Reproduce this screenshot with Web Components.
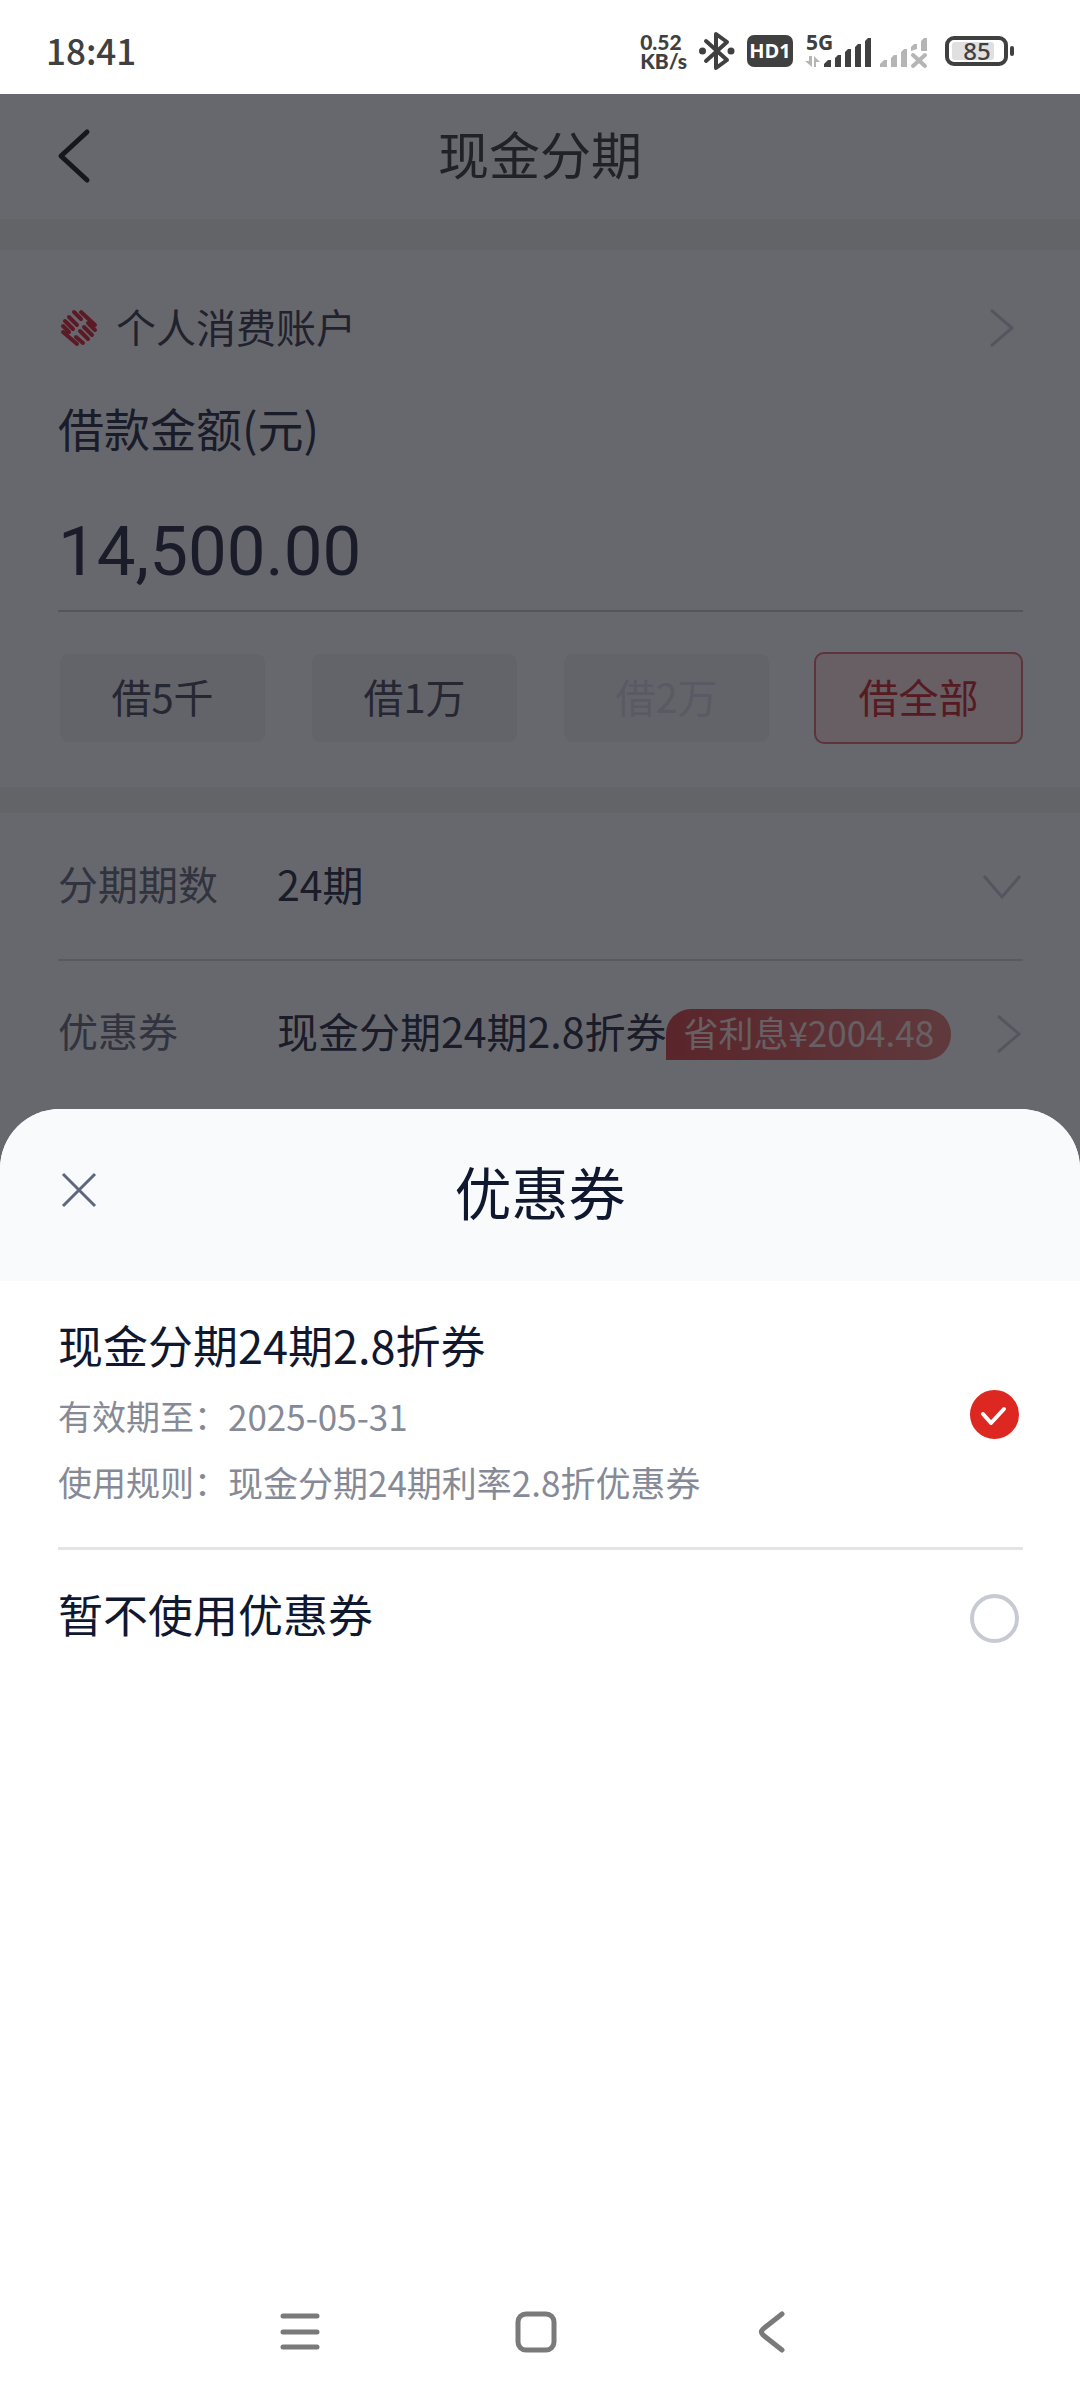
<!DOCTYPE html>
<html lang="zh-CN">
<head>
<meta charset="UTF-8">
<meta name="viewport" content="width=device-width, initial-scale=1">
<title>现金分期</title>
<style>
  :root {
    --ink: #10182f;
    --muted: #868a96;
    --red: #dd2822;
    --pad-l: 58px;
    --pad-r: 57px;
  }
  html, body { margin: 0; padding: 0; }
  body {
    font-family: "Noto Sans CJK SC", "Noto Sans", sans-serif;
    background: #fff;
    color: var(--ink);
  }
</style>
</head>
<body>
<cash-app></cash-app>

<script>
class UiBase extends HTMLElement {
  connectedCallback() {
    if (this.shadowRoot) return;
    this.attachShadow({ mode: 'open' });
    this.shadowRoot.innerHTML = `
      <style>
        *, *::before, *::after { box-sizing: border-box; }
        button {
          margin: 0;
          padding: 0;
          border: none;
          background: none;
          font: inherit;
          color: inherit;
          cursor: pointer;
        }
        svg { display: block; flex-shrink: 0; }
      </style>
      ${this.render()}`;
    this.ready?.();
  }
}

class StatusBar extends UiBase {
  render() {
    return `
      <style>
        :host {
          display: flex;
          align-items: center;
          justify-content: space-between;
          height: 94px;
          padding: 8px 64px 0 46px;
          background: #fff;
          color: #404040;
        }
        .time { font-size: 35px; font-weight: 500; line-height: 48px; padding-bottom: 2px; }
        .icons { display: flex; align-items: center; gap: 12px; }
        .speed {
          font-family: Lato, sans-serif;
          font-size: 21px;
          font-weight: 900;
          line-height: 19px;
        }
        .speed span { display: block; }
        .hd {
          width: 46px;
          height: 32px;
          border-radius: 7px;
          background: #404040;
          color: #fff;
          font-family: "Open Sans", sans-serif;
          font-size: 20px;
          font-weight: 700;
          line-height: 32px;
          text-align: center;
        }
        svg text { font-family: "Noto Sans", sans-serif; }
        .signals { display: flex; gap: 8px; }
        .battery { margin-left: 5px; }
      </style>
      <span class="time">18:41</span>
      <div class="icons">
        <div class="speed"><span>0.52</span><span>KB/s</span></div>
        <svg width="36" height="40" viewBox="0 0 36 40" fill="none" stroke="#404040" stroke-width="4" stroke-linejoin="round" stroke-linecap="round">
          <path d="M7 10 L28 29 L17 37 V3 L28 11 L7 30"/>
          <circle cx="3.500" cy="20" r="3.500" fill="#404040" stroke="none"/>
          <circle cx="32" cy="20" r="3.500" fill="#404040" stroke="none"/>
        </svg>
        <div class="hd">HD1</div>
        <div class="signals">
          <svg width="67" height="50" viewBox="0 -8 67 50" fill="#404040">
            <text x="1" y="16" font-size="21" font-weight="700">5G</text>
            <path fill="#b5b5b5" d="M4 22h3v11L0 27h4zM9 33V22l6 6h-4v5z"/>
            <path d="M19 33v-3l4-4h3v7zM30 33V24l3-3h3v12zM40 33V18l3-3h3v18zM50 33V13l3-3h3v23zM60 33V7l3-3h3v29z"/>
          </svg>
          <svg width="48" height="50" viewBox="0 -8 48 50" fill="#b5b5b5">
            <path d="M0 33v-3l4-4h3v7zM11 33V24l3-3h3v12zM21 33V18l3-3h3v18zM31 17V13l3-3h3v5zM41 17V7l3-3h3v13z"/>
            <path d="M33 21l12 11M45 21L33 32" stroke="#b5b5b5" stroke-width="4" stroke-linecap="round"/>
          </svg>
        </div>
        <svg class="battery" width="71" height="42" viewBox="0 -6 71 42">
          <rect x="7" y="6" width="42" height="18" rx="3" fill="#e0e0e0"/>
          <rect x="2" y="2" width="59" height="26" rx="7" fill="none" stroke="#404040" stroke-width="4"/>
          <rect x="65" y="10" width="4" height="10" rx="2" fill="#404040"/>
          <text x="32" y="24" font-size="24" font-weight="500" text-anchor="middle" fill="#404040">85</text>
        </svg>
      </div>`;
  }
}

class PageHeader extends UiBase {
  render() {
    return `
      <style>
        :host {
          display: grid;
          grid-template-columns: 1fr auto 1fr;
          align-items: center;
          height: 125px;
          padding: 0 56px;
          background: #fff;
          color: #50504e;
        }
        button { width: 40px; height: 60px; }
        h1 { margin: 0; padding-bottom: 8px; font-size: 51px; font-weight: 400; line-height: 64px; }
      </style>
      <button aria-label="返回">
        <svg width="36" height="60" viewBox="0 0 36 60" fill="none" stroke="#33353a" stroke-width="5" stroke-linecap="round" stroke-linejoin="round">
          <path d="M31 5 L5 29 L31 53"/>
        </svg>
      </button>
      <h1><slot></slot></h1>`;
  }
}

class UiChevron extends UiBase {
  render() {
    const down = this.getAttribute('dir') === 'down';
    return `
      <style>:host { display: block; flex-shrink: 0; }</style>
      <svg width="${down ? 38 : 24}" height="${down ? 24 : 38}" fill="none" stroke="#cfcfdb" stroke-width="3">
        <path d="${down ? 'M1 1 L19 22 L37 1' : 'M1 1 L22 19 L1 37'}"/>
      </svg>`;
  }
}

class AmountChip extends UiBase {
  render() {
    const off = this.hasAttribute('disabled') ? 'disabled' : '';
    return `
      <style>
        :host { display: block; flex: 1; }
        button {
          width: 100%;
          height: 92px;
          padding-bottom: 4px;
          border: 2px solid #fff;
          border-radius: 10px;
          background: #f5f5f4;
          background-clip: padding-box;
          color: #5c5d6c;
          font-size: 40px;
          line-height: 56px;
        }
        button:disabled { color: #dcdde8; }
        :host([selected]) button {
          background: #ffe8e8;
          border-color: #e87c80;
          color: #d44044;
        }
      </style>
      <button ${off}><slot></slot></button>`;
  }
}

class LoanRow extends UiBase {
  render() {
    return `
      <style>
        :host {
          display: flex;
          align-items: center;
          height: 146px;
          margin: 0 var(--pad-r) 0 var(--pad-l);
          padding-right: 2px;
          font-size: 40px;
          line-height: 56px;
        }
        :host([line]) {
          height: 148px;
          box-shadow: inset 0 -2px #dcdce0;
        }
        .label { width: 219px; padding-bottom: 8px; color: #787a8c; }
        .value { flex: 1; display: flex; align-items: center; white-space: nowrap; font-size: 41px; }
      </style>
      <div class="label" id="label"><slot name="label"></slot></div>
      <div class="value" role="group" aria-labelledby="label"><slot></slot></div>
      <slot name="arrow"></slot>`;
  }
}

class LoanPage extends UiBase {
  render() {
    return `
      <style>
        :host { display: block; position: relative; background: #f4f4f3; padding-bottom: 64px; }
        .scrim { position: absolute; inset: 0; background: rgba(2, 3, 12, .6); }
        .card { background: #fff; }
        .amount-card {
          margin-top: 31px;
          padding: 48px var(--pad-r) 43px var(--pad-l);
        }
        .account {
          display: flex;
          align-items: center;
          width: 100%;
          height: 60px;
          padding: 0 9px 0 2px;
          color: #505160;
          font-size: 40px;
          line-height: 56px;
          text-align: left;
        }
        .account .name { flex: 1; padding: 0 0 5px 18px; }
        .amount-label {
          display: block;
          margin-top: 39px;
          color: #424356;
          font-size: 46px;
          line-height: 60px;
        }
        .amount {
          display: block;
          width: 100%;
          height: 114px;
          margin-top: 41px;
          padding: 0 0 6px;
          border: none;
          border-bottom: 2px solid #d2d2d6;
          border-radius: 0;
          outline: none;
          background: none;
          color: #424356;
          font-family: Roboto, sans-serif;
          font-size: 69px;
        }
        .chips { display: flex; gap: 43px; margin-top: 40px; }
        .terms { margin-top: 26px; padding-bottom: 64px; margin-bottom: -64px; }
        select {
          flex: 1;
          appearance: none;
          margin: 0;
          padding: 0 0 8px;
          border: none;
          background: none;
          font: inherit;
          color: #424356;
        }
        .coupon { padding-bottom: 8px; color: #424356; }
        .badge {
          height: 51px;
          padding: 0 17px;
          border-radius: 25px 25px 25px 0;
          background: linear-gradient(90deg, #de585a, #ec8c86);
          color: #ffe9e9;
          font-size: 35px;
          line-height: 46px;
        }
      </style>
      <page-header>现金分期</page-header>
      <section class="card amount-card">
        <button class="account">
          <svg width="38" height="38" viewBox="0 0 38 38" fill="none" stroke="#e03e4c" stroke-width="4" stroke-linecap="round">
            <path d="M21 3L35 16M14 3L21 10M9 8L17 16M5 12L13 20M3 17L9 23M3 23L17 35M23 34L16 28M28 30L20 22M32 26L24 18M35 21L28 14"/>
          </svg>
          <span class="name">个人消费账户</span>
          <ui-chevron></ui-chevron>
        </button>
        <label class="amount-label" for="amount">借款金额(元)</label>
        <input class="amount" id="amount" type="text" inputmode="decimal" value="14,500.00">
        <div class="chips">
          <amount-chip>借5千</amount-chip>
          <amount-chip>借1万</amount-chip>
          <amount-chip disabled>借2万</amount-chip>
          <amount-chip selected>借全部</amount-chip>
        </div>
      </section>
      <section class="card terms">
        <loan-row line>
          <label slot="label" for="period">分期期数</label>
          <select id="period"><option>24期</option></select>
          <ui-chevron slot="arrow" dir="down"></ui-chevron>
        </loan-row>
        <loan-row>
          <span slot="label">优惠券</span>
          <span class="coupon">现金分期24期2.8折券</span>
          <span class="badge">省利息¥2004.48</span>
          <ui-chevron slot="arrow"></ui-chevron>
        </loan-row>
      </section>
      <div class="scrim"></div>`;
  }
}

class CouponOption extends UiBase {
  render() {
    return `
      <style>
        :host { display: block; margin: 0 var(--pad-r) 0 var(--pad-l); }
        :host([line]) { border-bottom: 3px solid #e4e4e7; }
        label {
          display: flex;
          align-items: center;
          justify-content: space-between;
          padding: 32px 4px 32px 0;
          cursor: pointer;
        }
        .text { padding-bottom: 8px; }
        :host([line]) .text { padding-bottom: 0; }
        .title { display: block; font-size: 45px; line-height: 64px; }
        .pick { display: grid; flex-shrink: 0; }
        .pick > * { grid-area: 1 / 1; }
        input {
          appearance: none;
          width: 49px;
          height: 49px;
          margin: 0;
          border: 4px solid #c7cad3;
          border-radius: 50%;
        }
        input:checked { border-color: var(--red); background: var(--red); }
        svg { visibility: hidden; pointer-events: none; }
        input:checked + svg { visibility: visible; }
      </style>
      <label>
        <span class="text">
          <span class="title"><slot></slot></span>
          <slot name="detail"></slot>
        </span>
        <span class="pick">
          <input type="radio" name="coupon" ${this.hasAttribute('checked') ? 'checked' : ''}>
          <svg width="49" height="49" viewBox="0 0 49 49" fill="none" stroke="#fff" stroke-width="4" stroke-linecap="round" stroke-linejoin="round">
            <path d="M13 24 L21 33 L34 19"/>
          </svg>
        </span>
      </label>`;
  }

  ready() {
    this.input = this.shadowRoot.querySelector('input');
    this.input.addEventListener('change', () => {
      this.dispatchEvent(new CustomEvent('pick', { bubbles: true }));
    });
  }
}

class CouponSheet extends UiBase {
  render() {
    return `
      <style>
        :host {
          display: block;
          position: relative;
          overflow: hidden;
          border-radius: 60px 60px 0 0;
          background: #fff;
        }
        header {
          display: grid;
          grid-template-columns: 1fr auto 1fr;
          align-items: center;
          height: 172px;
          padding: 0 60px 10px;
          background: #f9fafc;
        }
        header button { width: 38px; height: 48px; }
        h2 { margin: 0; font-size: 57px; font-weight: 400; line-height: 72px; }
        dl {
          display: grid;
          grid-template-columns: auto 1fr;
          align-items: center;
          margin: 6px 0 0;
          color: var(--muted);
        }
        dt { font-size: 34px; line-height: 66px; }
        dd { margin: 0; font-size: 35px; line-height: 66px; }
      </style>
      <header>
        <button aria-label="关闭">
          <svg width="38" height="38" viewBox="0 0 38 38" fill="none" stroke="#5f6780" stroke-width="3">
            <path d="M3 3L35 35M35 3L3 35"/>
          </svg>
        </button>
        <h2>优惠券</h2>
      </header>
      <coupon-option line checked>
        现金分期24期2.8折券
        <dl slot="detail">
          <dt>有效期至：</dt><dd>2025-05-31</dd>
          <dt>使用规则：</dt><dd>现金分期24期利率2.8折优惠券</dd>
        </dl>
      </coupon-option>
      <coupon-option>暂不使用优惠券</coupon-option>`;
  }

  ready() {
    this.shadowRoot.addEventListener('pick', (e) => {
      this.shadowRoot.querySelectorAll('coupon-option').forEach((o) => {
        o.input.checked = o === e.target;
      });
    });
  }
}

class SystemNav extends UiBase {
  render() {
    return `
      <style>
        :host {
          display: flex;
          justify-content: center;
          align-items: center;
          gap: 192px;
          height: 136px;
          padding-right: 8px;
          background: #fff;
        }
        button { width: 44px; height: 44px; }
      </style>
      <button aria-label="最近任务">
        <svg width="44" height="44" fill="none" stroke="#7a7a7a" stroke-width="5" stroke-linecap="round">
          <path d="M5 6H39M5 22H39M5 37H39"/>
        </svg>
      </button>
      <button aria-label="主屏幕">
        <svg width="44" height="44" fill="none" stroke="#7a7a7a" stroke-width="5">
          <rect x="4" y="4" width="36" height="36" rx="8"/>
        </svg>
      </button>
      <button aria-label="返回">
        <svg width="44" height="44" fill="none" stroke="#7a7a7a" stroke-width="5" stroke-linecap="round">
          <path d="M32 4L13 19Q10 22 13 25L32 40"/>
        </svg>
      </button>`;
  }
}

class CashApp extends UiBase {
  render() {
    return `
      <style>
        :host { display: flex; flex-direction: column; min-height: 100vh; }
        coupon-sheet { flex: 1; margin-top: -62px; }
      </style>
      <status-bar></status-bar>
      <loan-page></loan-page>
      <coupon-sheet></coupon-sheet>
      <system-nav></system-nav>`;
  }
}

customElements.define('status-bar', StatusBar);
customElements.define('page-header', PageHeader);
customElements.define('ui-chevron', UiChevron);
customElements.define('amount-chip', AmountChip);
customElements.define('loan-row', LoanRow);
customElements.define('loan-page', LoanPage);
customElements.define('coupon-option', CouponOption);
customElements.define('coupon-sheet', CouponSheet);
customElements.define('system-nav', SystemNav);
customElements.define('cash-app', CashApp);
</script>
</body>
</html>
